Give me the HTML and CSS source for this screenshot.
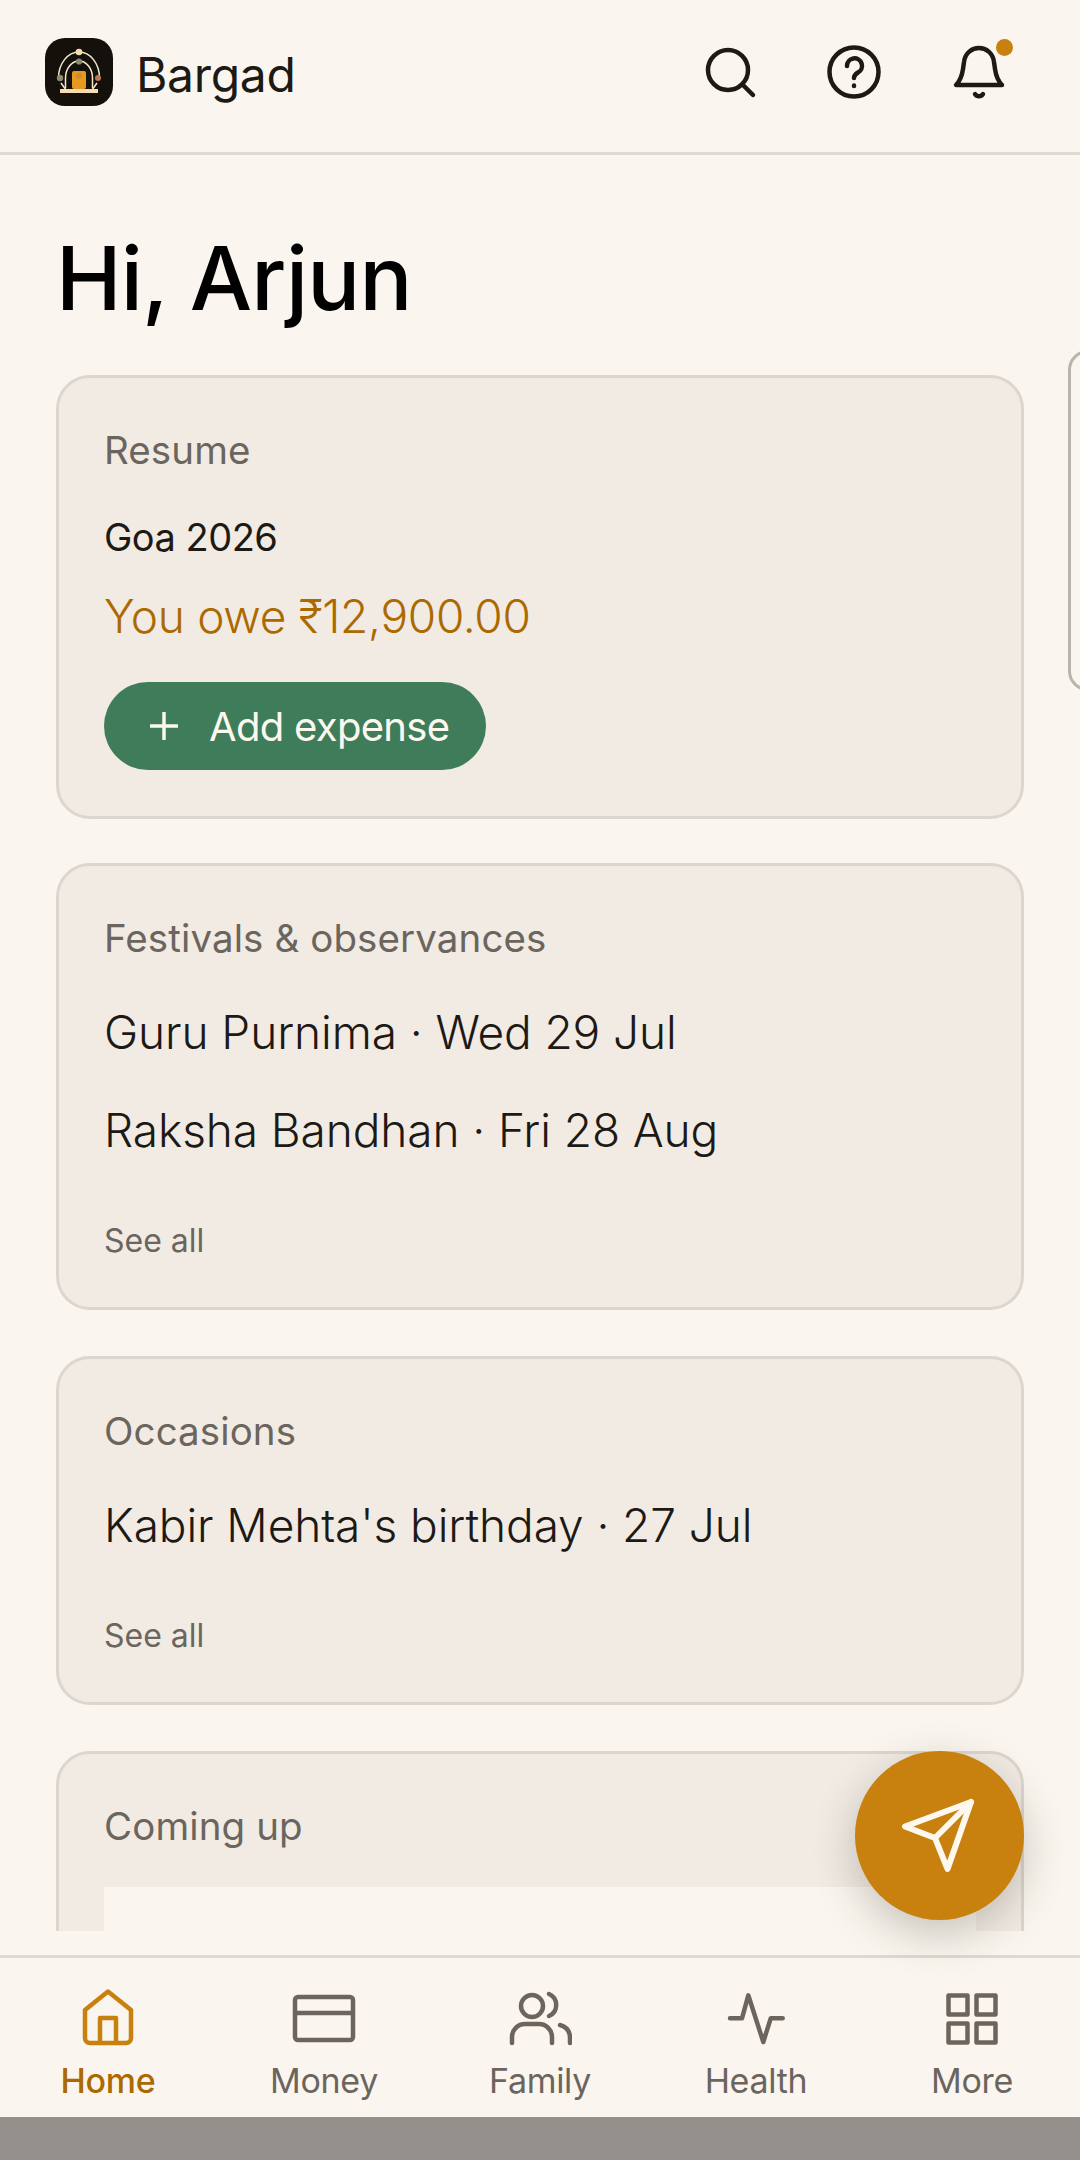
FILE: index.html
```html
<!DOCTYPE html>
<html lang="en">
<head>
    <meta charset="UTF-8">
    <meta name="viewport" content="width=device-width, initial-scale=1.0">
    <title>Bargad</title>
    <link rel="stylesheet" href="styles.css">
</head>
<body>
<div class="app">

    <!-- Top bar -->
    <header class="topbar">
        <div class="brand">
            <svg class="logo" viewBox="0 0 68 68">
                <rect width="68" height="68" rx="20" fill="#14100b"/>
                <path d="M13.500 40A20.500 26 0 0 1 54.500 40M16 45l5 7M52 45l-5 7" fill="none" stroke="#f7e7c9" stroke-width="1.500"/>
                <path d="M20.500 50V40A13.500 17 0 0 1 47.500 40V50" fill="none" stroke="#f7e7c9" stroke-width="1.500"/>
                <rect x="27" y="33" width="14" height="18" rx="2" fill="#e8981f"/>
                <circle cx="34" cy="38" r="3" fill="#cf8c2c"/>
                <rect x="15" y="51" width="38" height="4" fill="#f8dcae"/>
                <circle cx="34" cy="14" r="3.300" fill="#f7dcb3"/>
                <circle cx="34" cy="23.500" r="3.100" fill="#8a8e6e"/>
                <circle cx="15" cy="40" r="3.200" fill="#8a8e6e"/>
                <circle cx="53" cy="40" r="3" fill="#b9774f"/>
            </svg>
            <span class="brand-name">Bargad</span>
        </div>
        <div class="top-icons">
            <svg class="top-icon" viewBox="0 0 60 60">
                <circle cx="28" cy="28" r="20"/>
                <path d="M43 43l10 10"/>
            </svg>
            <svg class="top-icon" viewBox="0 0 60 60">
                <circle cx="30" cy="30" r="24.500"/>
                <path d="M23 24a7.500 7.500 0 1 1 11 6.500c-2.500 1.500-4 2.500-4 5.500"/>
                <path d="M30 43.500v.5"/>
            </svg>
            <div class="bell">
                <svg class="top-icon" viewBox="0 0 60 60">
                    <path d="M8 43h46c-4-4-6-9-7-16l-1-7C45 11 38 6 31 6S17 11 16 20l-1 7c-1 7-3 12-7 16z"/>
                    <path d="M27 52c2 3 6 3 8 0"/>
                </svg>
                <span class="bell-dot"></span>
            </div>
        </div>
    </header>

    <!-- Contenido -->
    <main class="content">
        <h1>Hi, Arjun</h1>

        <div class="resume-row">
            <section class="card resume-card">
                <div class="card-title">Resume</div>
                <div class="trip-name">Goa 2026</div>
                <div class="trip-owe">You owe ₹12,900.00</div>
                <button class="add-btn">
                    <svg class="plus" viewBox="0 0 32 32"><path d="M16 2v28M2 16h28"/></svg>
                    Add expense
                </button>
            </section>
            <section class="card peek-card"></section>
        </div>

        <section class="card">
            <div class="card-title">Festivals &amp; observances</div>
            <div class="row first">Guru Purnima · Wed 29 Jul</div>
            <div class="row">Raksha Bandhan · Fri 28 Aug</div>
            <div class="see-all">See all</div>
        </section>

        <section class="card">
            <div class="card-title">Occasions</div>
            <div class="row first">Kabir Mehta's birthday · 27 Jul</div>
            <div class="see-all">See all</div>
        </section>

        <section class="card">
            <div class="card-title">Coming up</div>
            <div class="coming-box"></div>
        </section>
    </main>

    <button class="fab">
        <svg viewBox="0 0 169 169">
            <path d="M116 51L50 75.500L80 87L92.500 118Z"/>
            <path d="M80 87L116 51"/>
        </svg>
    </button>

    <!-- Bottom nav -->
    <nav class="bottom-nav">
        <div class="nav-item active">
            <svg viewBox="0 0 64 60">
                <path d="M32 2.500L55 21V49a5 5 0 0 1-5 5H14a5 5 0 0 1-5-5V21Z"/>
                <path d="M24 54V29H40V54"/>
            </svg>
            <span>Home</span>
        </div>
        <div class="nav-item">
            <svg viewBox="0 0 64 60">
                <rect x="3" y="8" width="58" height="43" rx="3"/>
                <path d="M3 24H61"/>
            </svg>
            <span>Money</span>
        </div>
        <div class="nav-item">
            <svg viewBox="0 0 64 60">
                <circle cx="24" cy="17" r="11"/>
                <path d="M41 5a12 12 0 0 1 0 22"/>
                <path d="M4 54v-6a13 13 0 0 1 13-13h14a13 13 0 0 1 13 13v6"/>
                <path d="M52 36c7 2 10 7 10 13v5"/>
            </svg>
            <span>Family</span>
        </div>
        <div class="nav-item">
            <svg viewBox="0 0 64 60">
                <path d="M6 29.300H18L24.300 6.300L39.300 53L46.700 29.300H58.700"/>
            </svg>
            <span>Health</span>
        </div>
        <div class="nav-item">
            <svg viewBox="0 0 64 60">
                <rect x="8.500" y="6.500" width="19" height="19"/>
                <rect x="36.500" y="6.500" width="19" height="19"/>
                <rect x="8.500" y="34.500" width="19" height="19"/>
                <rect x="36.500" y="34.500" width="19" height="19"/>
            </svg>
            <span>More</span>
        </div>
    </nav>

    <div class="system-bar"></div>
</div>
</body>
</html>
```

FILE: styles.css
```css
/* Base */
* {
    box-sizing: border-box;
}

body {
    margin: 0;
    font-family: Inter, "Noto Sans", sans-serif;
    background-color: #faf6ef;
    color: #1d1915;
}

.app {
    position: relative;
    display: flex;
    flex-direction: column;
    height: 2160px;
    overflow: hidden;
}

/* Top bar */
.topbar {
    flex: none;
    height: 155px;
    display: flex;
    justify-content: space-between;
    align-items: center;
    padding: 0 72px 8px 45px;
    border-bottom: 3px solid #dedad2;
}

.brand {
    display: flex;
    align-items: center;
    gap: 23px;
}

.logo {
    width: 68px;
    height: 68px;
}

.brand-name {
    margin-top: 4px;
    font-size: 48px;
    letter-spacing: -0.3px;
}

.top-icons {
    display: flex;
    gap: 64px;
}

.top-icon {
    display: block;
    width: 60px;
    height: 60px;
    fill: none;
    stroke: #1d1915;
    stroke-width: 4.500;
    stroke-linecap: round;
    stroke-linejoin: round;
}

.bell {
    position: relative;
}

.bell-dot {
    position: absolute;
    top: -3px;
    right: -5px;
    width: 17px;
    height: 17px;
    border-radius: 50%;
    background-color: #c8800f;
}

/* Contenido */
.content {
    flex: 1;
    min-height: 0;
    overflow: hidden;
    margin-bottom: 24px;
    padding: 0 56px;
}

h1 {
    margin: 70px 0 0;
    font-size: 88px;
    font-weight: 450;
    line-height: 106px;
    letter-spacing: -0.8px;
    color: #000;
}

.card {
    width: 968px;
    flex: none;
    margin-bottom: 46px;
    padding: 47px 45px 46px;
    background-color: #f1ebe4;
    border: 3px solid #dbd7cf;
    border-radius: 34px;
}

.card-title {
    font-size: 38.500px;
    line-height: 50px;
    color: #6b655e;
    letter-spacing: 0.1px;
}

/* Resume */
.resume-row {
    display: flex;
    align-items: flex-start;
    gap: 44px;
    margin-top: 19px;
}

.resume-card {
    margin-top: 25px;
    margin-bottom: 44px;
}

.peek-card {
    height: 341px;
    background-color: #faf6ef;
    border-color: #b8b5ad;
    border-radius: 20px;
}

.trip-name {
    margin-top: 37px;
    font-size: 38px;
    font-weight: 400;
    line-height: 50px;
    letter-spacing: -0.5px;
}

.trip-owe {
    margin-top: 24px;
    font-size: 46px;
    font-weight: 300;
    line-height: 60px;
    color: #ab6900;
    letter-spacing: -0.3px;
}

.add-btn {
    display: flex;
    align-items: center;
    gap: 29px;
    height: 88px;
    margin-top: 36px;
    padding: 0 37px 0 44px;
    background-color: #3f7d5a;
    color: #fbf8f0;
    border: none;
    border-radius: 44px;
    font-family: inherit;
    font-size: 40px;
    letter-spacing: -0.7px;
}

.plus {
    width: 32px;
    height: 32px;
    fill: none;
    stroke: #fbf8f0;
    stroke-width: 3.500;
}

/* Listas */
.row {
    margin-top: 38px;
    font-size: 46px;
    font-weight: 300;
    line-height: 60px;
    letter-spacing: -0.1px;
}

.row.first {
    margin-top: 39px;
}

.see-all {
    margin-top: 61px;
    font-size: 32px;
    line-height: 40px;
    color: #6b655e;
}

.coming-box {
    height: 200px;
    margin-top: 36px;
    background-color: #faf6ef;
}

/* Boton flotante */
.fab {
    position: absolute;
    left: 855px;
    top: 1751px;
    width: 169px;
    height: 169px;
    padding: 0;
    border: none;
    border-radius: 50%;
    background-color: #c8800f;
    box-shadow: 0 14px 44px rgba(40, 34, 20, 0.24);
}

.fab svg {
    display: block;
    fill: none;
    stroke: #fdf8ee;
    stroke-width: 6;
    stroke-linecap: round;
    stroke-linejoin: round;
}

/* Bottom nav */
.bottom-nav {
    flex: none;
    height: 162px;
    display: flex;
    padding-top: 31px;
    border-top: 3px solid #dedad2;
}

.nav-item {
    flex: 1;
    display: flex;
    flex-direction: column;
    align-items: center;
    color: #6b655e;
}

.nav-item svg {
    width: 64px;
    height: 60px;
    fill: none;
    stroke: #6b655e;
    stroke-width: 4.500;
    stroke-linecap: round;
    stroke-linejoin: round;
}

.nav-item span {
    margin-top: 12px;
    font-size: 34px;
    line-height: 40px;
    letter-spacing: -0.3px;
}

.nav-item.active {
    color: #ab6900;
}

.nav-item.active svg {
    stroke: #c8800f;
}

.nav-item.active span {
    font-weight: 500;
}

.system-bar {
    flex: none;
    height: 43px;
    background-color: #94918c;
}
```
